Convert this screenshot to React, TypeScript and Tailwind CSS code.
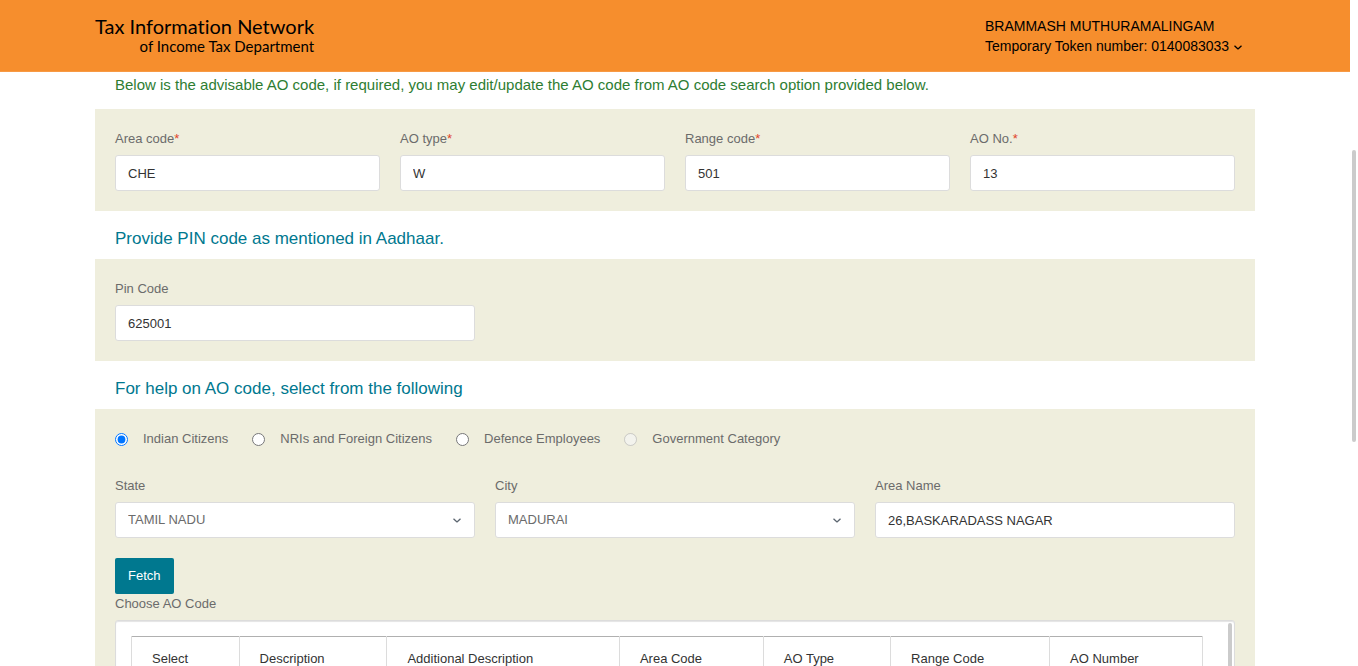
import { useId } from "react";
import type { ReactNode } from "react";

function Chevron({ className }: { className: string }) {
  return (
    <svg
      viewBox="0 0 8 5"
      width="8"
      height="5"
      fill="none"
      stroke="currentColor"
      strokeWidth="1.3"
      strokeLinejoin="round"
      className={className}
      aria-hidden="true"
    >
      <path d="M0.5 0.8 L4 3.9 L7.5 0.8" />
    </svg>
  );
}

const boxClass =
  "block h-9 w-full rounded-[3px] border border-[#dcdcdc] bg-white px-3 text-[13px] leading-5 outline-none focus:border-[#00788f]";

function TextField({ label, value, required }: { label: string; value: string; required?: boolean }) {
  const id = useId();
  return (
    <div className="flex min-w-0 flex-col gap-[6px]">
      <label htmlFor={id} className="text-[13px] leading-5 text-[#6b6b6b]">
        {label}
        {required && <span className="text-[#e0442a]">*</span>}
      </label>
      <input id={id} type="text" defaultValue={value} className={`${boxClass} text-[#333]`} />
    </div>
  );
}

function SelectField({ label, value }: { label: string; value: string }) {
  const id = useId();
  return (
    <div className="flex min-w-0 flex-col gap-[6px]">
      <label htmlFor={id} className="text-[13px] leading-5 text-[#6b6b6b]">
        {label}
      </label>
      <div className="relative">
        <select id={id} defaultValue={value} className={`${boxClass} appearance-none text-[#6b6b6b]`}>
          <option>{value}</option>
        </select>
        <Chevron className="pointer-events-none absolute top-4 right-[14px] text-[#5c6670]" />
      </div>
    </div>
  );
}

function Panel({ children }: { children: ReactNode }) {
  return <section className="bg-[#efeedd] p-5">{children}</section>;
}

function Heading({ children }: { children: ReactNode }) {
  return <h2 className="px-5 pt-4 pb-2 text-[17px] leading-6 text-[#00788f]">{children}</h2>;
}

const categories = [
  { name: "Indian Citizens" },
  { name: "NRIs and Foreign Citizens" },
  { name: "Defence Employees" },
  { name: "Government Category", disabled: true },
];

const columns = [
  "Select",
  "Description",
  "Additional Description",
  "Area Code",
  "AO Type",
  "Range Code",
  "AO Number",
];

export default function App() {
  return (
    <div className="flex h-screen overflow-hidden bg-white font-['Liberation_Sans',Arial,sans-serif]">
      <div className="flex min-w-0 flex-1 flex-col">
        <header className="shrink-0 border-b border-[#f79a45] bg-[#f68e2d] text-black">
          <div className="mx-auto flex h-[71px] max-w-[1160px] items-start justify-between">
            <a
              href="#"
              className="flex flex-col items-end pt-[15px] font-[Lato,'Open_Sans',sans-serif] [font-variant-ligatures:none]"
            >
              <span className="text-[20px] leading-[22px]">Tax Information Network</span>
              <span className="text-[15px] leading-[18px]">of Income Tax Department</span>
            </a>
            <button type="button" className="w-[270px] pt-4 text-left text-[14px] leading-5">
              <span className="block">BRAMMASH MUTHURAMALINGAM</span>
              <span className="flex items-center gap-[5px]">
                Temporary Token number: 0140083033
                <Chevron className="mt-[2px]" />
              </span>
            </button>
          </div>
        </header>

        <main className="mx-auto w-full max-w-[1160px] min-h-0 flex-1 overflow-hidden">
          <p className="px-5 pt-[3px] pb-[14px] text-[15px] leading-5 text-[#2e7d32]">
            Below is the advisable AO code, if required, you may edit/update the AO code from AO code search
            option provided below.
          </p>
          <Panel>
            <div className="grid grid-cols-4 gap-5">
              <TextField label="Area code" value="CHE" required />
              <TextField label="AO type" value="W" required />
              <TextField label="Range code" value="501" required />
              <TextField label="AO No." value="13" required />
            </div>
          </Panel>

          <Heading>Provide PIN code as mentioned in Aadhaar.</Heading>
          <Panel>
            <div className="grid grid-cols-3 gap-5">
              <TextField label="Pin Code" value="625001" />
            </div>
          </Panel>

          <Heading>For help on AO code, select from the following</Heading>
          <Panel>
            <div className="flex gap-6 text-[13px] leading-5 text-[#6b6b6b]">
              {categories.map((category, index) => (
                <label key={category.name} className="flex items-center gap-[15px]">
                  <input
                    type="radio"
                    name="category"
                    defaultChecked={index === 0}
                    disabled={category.disabled}
                    className="size-[13px]"
                  />
                  {category.name}
                </label>
              ))}
            </div>
            <div className="mt-[27px] grid grid-cols-3 gap-5">
              <SelectField label="State" value="TAMIL NADU" />
              <SelectField label="City" value="MADURAI" />
              <TextField label="Area Name" value="26,BASKARADASS NAGAR" />
            </div>
            <button
              type="button"
              className="mt-5 block h-9 rounded-[2px] bg-[#00788f] px-[13px] text-[13px] leading-5 text-white"
            >
              Fetch
            </button>
            <p className="text-[13px] leading-5 text-[#6b6b6b]">Choose AO Code</p>
            <div className="mt-[6px] flex h-60 overflow-hidden rounded-[3px] border border-[#dcdcdc] bg-white shadow-[inset_0_1px_1px_#e4e4e4]">
              <div className="min-w-0 flex-1 py-[15px] pr-[23px] pl-[15px]">
                <table className="w-full border-collapse text-[13px] leading-5 text-[#333]">
                  <thead>
                    <tr className="border-t border-[#b0b0b0]">
                      {columns.map((column) => (
                        <th
                          key={column}
                          className="border-x border-[#dcdcdc] px-5 py-3 text-left font-normal whitespace-nowrap"
                        >
                          {column}
                        </th>
                      ))}
                    </tr>
                  </thead>
                </table>
              </div>
              <div className="w-2 pt-[2px] pl-[2px]">
                <div className="h-28 w-1 rounded-sm bg-[#cbcbcb]" />
              </div>
            </div>
          </Panel>
        </main>
      </div>
      <div className="w-2 shrink-0 pt-[150px] pl-[2px]">
        <div className="h-[292px] w-1 rounded-sm bg-[#cbcbcb]" />
      </div>
    </div>
  );
}
